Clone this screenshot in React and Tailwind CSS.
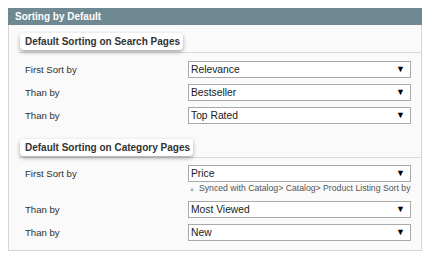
export default function App() {
  const Row = ({ label, value, note }) => (
    <div className="flex items-start">
      <div className="w-[169px] shrink-0 pl-[6px] h-[17px] leading-[17px] text-[9.6px] text-[#2f2f2f]">{label}</div>
      <div className="w-[223px]">
        <div className="h-[17px] border border-[#a9a9a9] bg-white flex items-center justify-between pl-[2px] pr-[5px] text-[10.3px] text-[#1a1a1a]">
          <span>{value}</span>
          <span className="text-[9px] leading-none text-black">▼</span>
        </div>
        {note && (
          <div className="flex items-center h-[12px] mt-[1px] pl-[1px] text-[8.7px] text-[#555] whitespace-nowrap">
            <span className="text-[6px] text-[#aaa] mr-[4px]">▲</span>
            <span>Synced with Catalog&gt; Catalog&gt; Product Listing Sort by</span>
          </div>
        )}
      </div>
    </div>
  );

  const Title = ({ children }) => (
    <div className="relative z-10 self-start ml-[1px] h-[17px] leading-[17px] pl-[5px] pr-[3px] bg-white rounded-[4px] shadow-[0_2px_4px_rgba(0,0,0,0.35)] text-[10px] font-bold text-[#333]">
      {children}
    </div>
  );

  return (
    <div className="w-[431px] h-[260px] bg-white pt-[8px] pl-[8px]" style={{ fontFamily: '"Liberation Sans", Arial, sans-serif' }}>
      <div className="w-[414px]">
        <div className="h-[17px] bg-[#6f8992] pl-[7px] leading-[17px] text-[10px] font-bold text-white">Sorting by Default</div>
        <div className="h-[226px] border-x border-b border-[#d6d6d6] bg-[#fafafa] pl-[10px]">
          <div className="flex flex-col pt-[8px]">
            <Title>Default Sorting on Search Pages</Title>
            <div className="mt-[2px] border-b border-[#d9d9d9]" />
            <div className="flex flex-col gap-[6px] pt-[8px]">
              <Row label="First Sort by" value="Relevance" />
              <Row label="Than by" value="Bestseller" />
              <Row label="Than by" value="Top Rated" />
            </div>
          </div>
          <div className="flex flex-col pt-[15px]">
            <Title>Default Sorting on Category Pages</Title>
            <div className="mt-[1px] border-b border-[#d9d9d9]" />
            <div className="flex flex-col gap-[6px] pt-[7px]">
              <Row label="First Sort by" value="Price" note />
              <Row label="Than by" value="Most Viewed" />
              <Row label="Than by" value="New" />
            </div>
          </div>
        </div>
      </div>
    </div>
  );
}
